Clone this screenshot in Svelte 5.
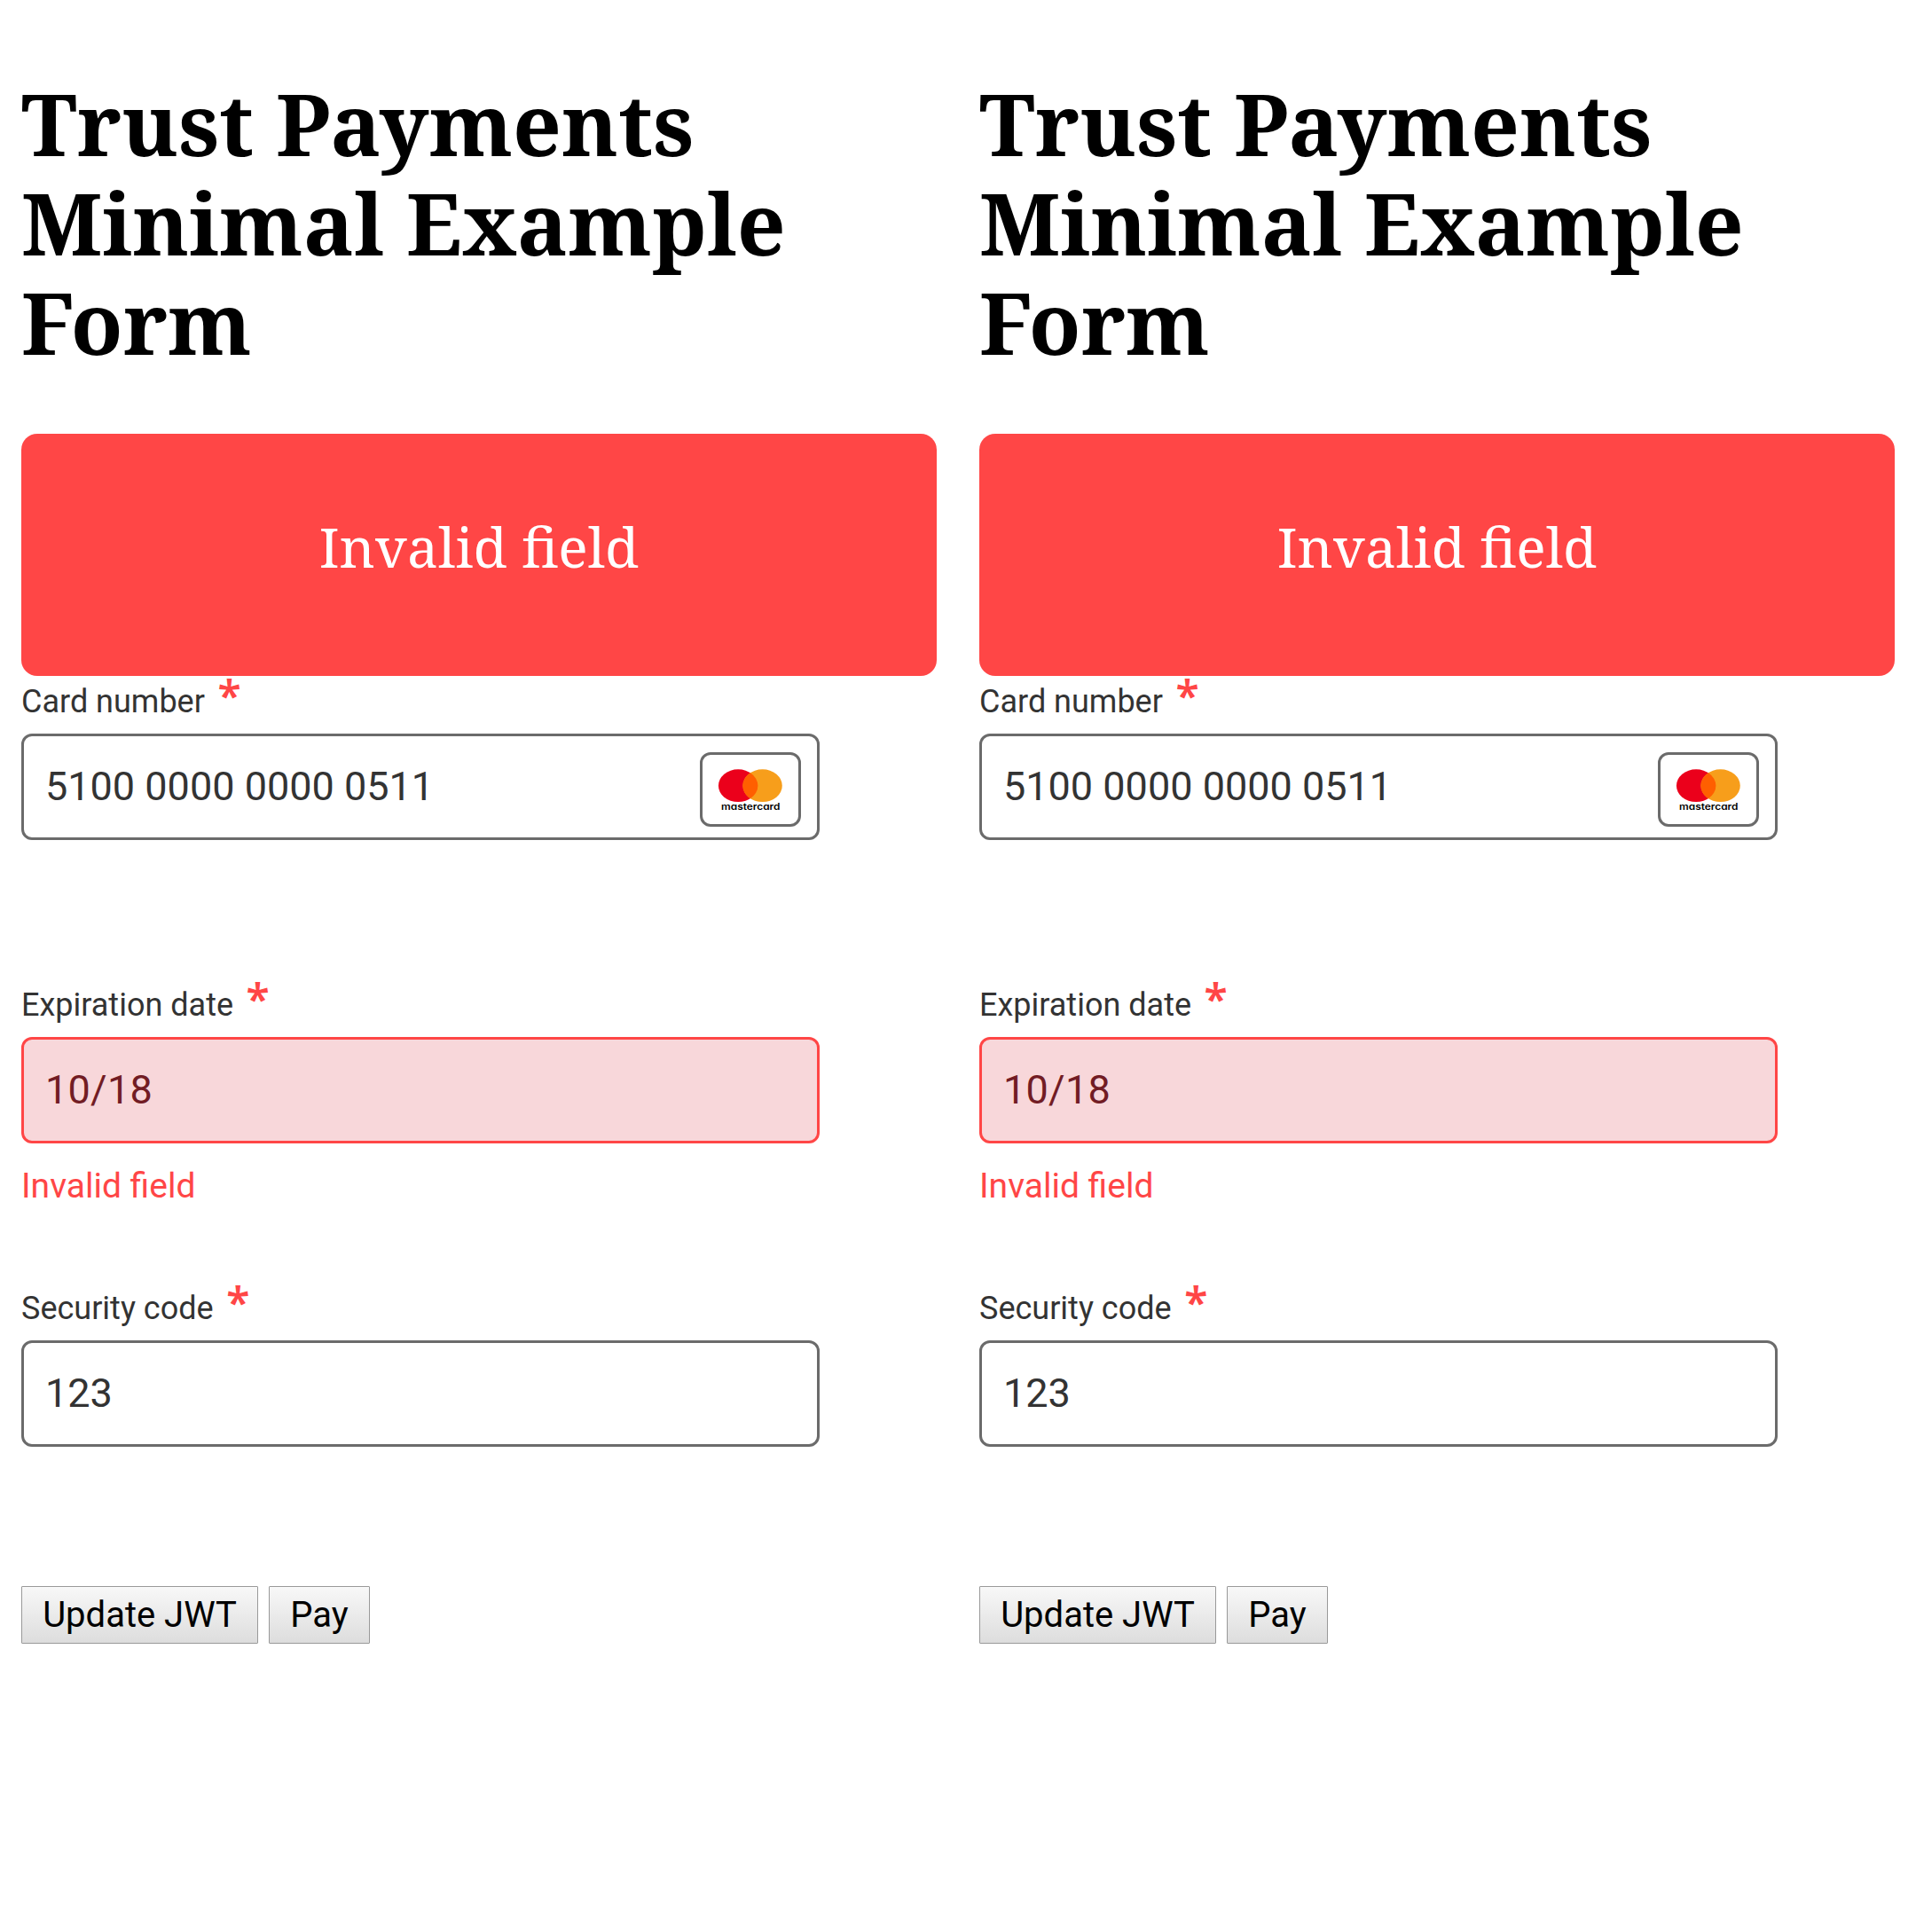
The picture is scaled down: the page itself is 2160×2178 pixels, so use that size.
<script>
  const panels = ['left', 'right'];
  const fields = [
    { id: 'card', label: 'Card number', value: '5100 0000 0000 0511', card: true, error: '' },
    { id: 'expiry', label: 'Expiration date', value: '10/18', card: false, error: 'Invalid field' },
    { id: 'code', label: 'Security code', value: '123', card: false, error: '' }
  ];
</script>

<main>
  {#each panels as panel (panel)}
    <section class="panel">
      <h1>Trust Payments Minimal Example Form</h1>
      <div class="alert">Invalid field</div>
      {#each fields as field (field.id)}
        <div class="field" class:invalid={field.error}>
          <div class="label">{field.label}<span class="star">*</span></div>
          <div class="input">
            <span>{field.value}</span>
            {#if field.card}
              <svg class="brand" width="114" height="84" viewBox="0 0 114 84">
                <rect x="1.5" y="1.5" width="111" height="81" rx="10.5" fill="#fff" stroke="#6b6b6b" stroke-width="3" />
                <ellipse cx="43.1" cy="37.7" rx="22.2" ry="18.4" fill="#eb001b" />
                <ellipse cx="70.6" cy="37.7" rx="22.2" ry="18.4" fill="#f79e1b" />
                <path d="M56.85 23.2A22.2 18.4 0 0 1 56.85 52.2A22.2 18.4 0 0 1 56.85 23.2Z" fill="#ff5f00" />
                <text x="24" y="65.3" textLength="66.5" lengthAdjust="spacingAndGlyphs">mastercard</text>
              </svg>
            {/if}
          </div>
          <div class="error">{field.error}</div>
        </div>
      {/each}
      <div class="actions">
        <button class="update">Update JWT</button>
        <button class="pay">Pay</button>
      </div>
    </section>
  {/each}
</main>

<style>
  :global(body) {
    background: #fff;
  }
  main {
    display: grid;
    grid-template-columns: 1080px 1080px;
    height: 2178px;
    overflow: hidden;
    font-family: Roboto, sans-serif;
  }
  .panel {
    padding: 83px 24px 0;
  }
  svg {
    display: block;
  }
  h1 {
    margin: 0 0 70px;
    font: bold 96px/112px 'Noto Serif', 'DejaVu Serif', serif;
    color: #000;
  }
  .alert {
    box-sizing: border-box;
    height: 273px;
    padding-top: 86px;
    border-radius: 18px;
    background: #ff4646;
    font: 62.4px/82px 'Noto Serif', 'DejaVu Serif', serif;
    text-align: center;
    color: #fff;
  }
  .field {
    height: 342px;
  }
  .label {
    display: flex;
    height: 65px;
    box-sizing: border-box;
    padding-top: 8px;
    font-size: 36px;
    line-height: 42px;
    color: #333;
  }
  .star {
    margin: -16px 0 0 14.5px;
    font-family: 'Noto Sans', sans-serif;
    font-weight: 600;
    font-size: 48px;
    line-height: 60px;
    height: 42px;
    color: #ff4646;
  }
  .input {
    display: flex;
    align-items: center;
    justify-content: space-between;
    box-sizing: border-box;
    width: 900px;
    height: 120px;
    padding: 0 18px 0 24px;
    border: 3px solid #6b6b6b;
    border-radius: 12px;
    font-size: 45px;
    line-height: 54px;
    color: #333;
  }
  .brand {
    margin-top: 6px;
  }
  .brand text {
    font: 600 10px Inter, sans-serif;
    font-feature-settings: 'cv11';
    fill: #000;
  }
  .invalid .input {
    border-color: #ff4646;
    background: #f8d7da;
    color: #721c24;
    letter-spacing: 0.25px;
  }
  .error {
    margin-top: 24px;
    font-size: 39px;
    line-height: 48px;
    color: #ff4646;
  }
  .actions {
    display: flex;
    gap: 12px;
  }
  button {
    box-sizing: border-box;
    height: 65px;
    padding: 0;
    border: 1px solid #999;
    border-radius: 1px;
    background: linear-gradient(#f8f8f8, #ddd);
    font: 40px/62px Roboto, sans-serif;
    color: #000;
  }
  .update {
    width: 267px;
  }
  .pay {
    width: 114px;
  }
</style>
